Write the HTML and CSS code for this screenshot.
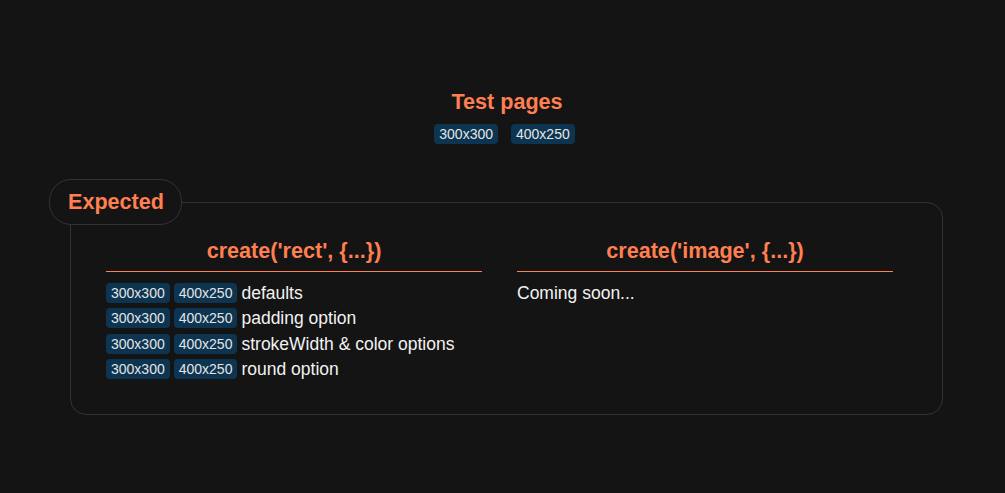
FILE: index.html
```html
<!DOCTYPE html>
<html>
<head>
<meta charset="utf-8">
<link rel="stylesheet" href="styles.css">
</head>
<body>
<header class="top">
  <h1 class="title">Test pages</h1>
  <div class="top-badges">
    <span class="badge">300x300</span>
    <span class="badge">400x250</span>
  </div>
</header>
<fieldset class="group">
  <legend class="legend">Expected</legend>
  <div class="cols">
    <section class="col">
      <h2 class="col-title">create('rect', {...})</h2>
      <ul class="rows">
        <li class="row"><span class="badge">300x300</span><span class="badge">400x250</span><span>defaults</span></li>
        <li class="row"><span class="badge">300x300</span><span class="badge">400x250</span><span>padding option</span></li>
        <li class="row"><span class="badge">300x300</span><span class="badge">400x250</span><span>strokeWidth &amp; color options</span></li>
        <li class="row"><span class="badge">300x300</span><span class="badge">400x250</span><span>round option</span></li>
      </ul>
    </section>
    <section class="col">
      <h2 class="col-title">create('image', {...})</h2>
      <p class="soon">Coming soon...</p>
    </section>
  </div>
</fieldset>
</body>
</html>
```

FILE: styles.css
```css
html, body {
  margin: 0;
  padding: 0;
  background: #141414;
  color: #f2f2f2;
  font-family: "Liberation Sans", Arial, sans-serif;
  font-size: 17.5px;
}
body {
  padding: 90px 62px 0 70px;
}
.top {
  display: flex;
  flex-direction: column;
  align-items: center;
  padding-left: 1px;
}
.title {
  margin: 0;
  font-size: 21.6px;
  line-height: 23px;
  font-weight: bold;
  color: #ff7f50;
}
.top-badges {
  display: flex;
  gap: 13px;
  margin-top: 11px;
  margin-right: 5px;
}
.badge {
  display: inline-block;
  background: #0d3551;
  color: #e4e4e4;
  font-size: 14px;
  line-height: 20px;
  height: 20px;
  padding: 0 5px;
  border-radius: 4px;
}
.group {
  margin: 35px 0 0 0;
  padding: 14px 0 35px 35px;
  border: 1px solid #333;
  border-radius: 16px;
  min-width: 0;
}
.legend {
  margin-left: -57px;
  padding: 10px 17px 11px 18px;
  border: 1px solid #333;
  border-radius: 22px;
  font-size: 21.6px;
  line-height: 23px;
  font-weight: bold;
  color: #ff7f50;
  background: #141414;
}
.cols {
  display: flex;
  gap: 35px;
}
.col {
  width: 376px;
}
.col-title {
  margin: 0;
  font-size: 21.6px;
  line-height: 23px;
  font-weight: bold;
  color: #ff7f50;
  text-align: center;
  padding-bottom: 9px;
  border-bottom: 1px solid #ff7f50;
}
.rows {
  list-style: none;
  margin: 11px 0 0 0;
  padding: 0;
  display: flex;
  flex-direction: column;
  gap: 5.3px;
}
.row {
  display: flex;
  align-items: center;
  gap: 4px;
  height: 20px;
  line-height: 20px;
}
.soon {
  margin: 11px 0 0 0;
  line-height: 20px;
}
```
